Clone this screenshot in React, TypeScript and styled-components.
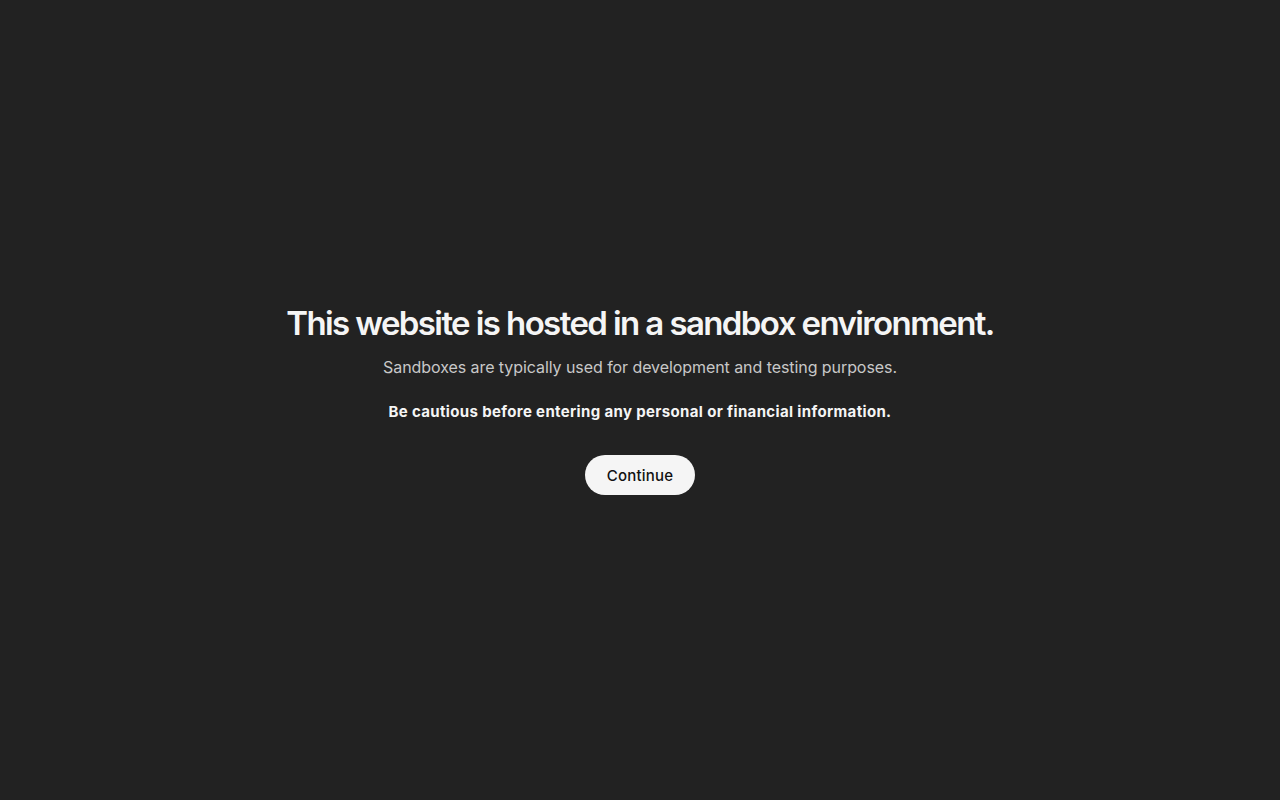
import React from "react";
import styled, { createGlobalStyle } from "styled-components";

const GlobalStyle = createGlobalStyle`
  html, body { margin: 0; padding: 0; background: #222222; }
  body { font-family: Inter, "Noto Sans", sans-serif; -webkit-font-smoothing: antialiased; }
`;

const Page = styled.main`
  box-sizing: border-box;
  min-height: 100vh;
  padding-bottom: 2px;
  display: flex;
  flex-direction: column;
  align-items: center;
  justify-content: center;
  background: #222222;
  text-align: center;
`;

const Title = styled.h1`
  margin: 0;
  font-size: 33px;
  line-height: 40px;
  font-weight: 600;
  letter-spacing: -1.6px;
  color: #f5f5f5;
`;

const Subtitle = styled.p`
  margin: 12px 0 0;
  font-size: 16px;
  line-height: 24px;
  letter-spacing: -0.07px;
  color: #c8c8c8;
`;

const Warning = styled.p`
  margin: 23px 0 0;
  font-size: 15px;
  line-height: 20px;
  font-weight: 700;
  letter-spacing: 0.35px;
  color: #f5f5f5;
`;

const Button = styled.button`
  margin-top: 33px;
  height: 40px;
  padding: 0 22px;
  border: none;
  border-radius: 999px;
  background: #f5f5f5;
  color: #111111;
  font-family: Inter, "Noto Sans", sans-serif;
  font-size: 15px;
  font-weight: 500;
  letter-spacing: 0.2px;
  cursor: pointer;
`;

export default function App() {
  return (
    <>
      <GlobalStyle />
      <Page>
        <Title>This website is hosted in a sandbox environment.</Title>
        <Subtitle>Sandboxes are typically used for development and testing purposes.</Subtitle>
        <Warning>Be cautious before entering any personal or financial information.</Warning>
        <Button>Continue</Button>
      </Page>
    </>
  );
}
